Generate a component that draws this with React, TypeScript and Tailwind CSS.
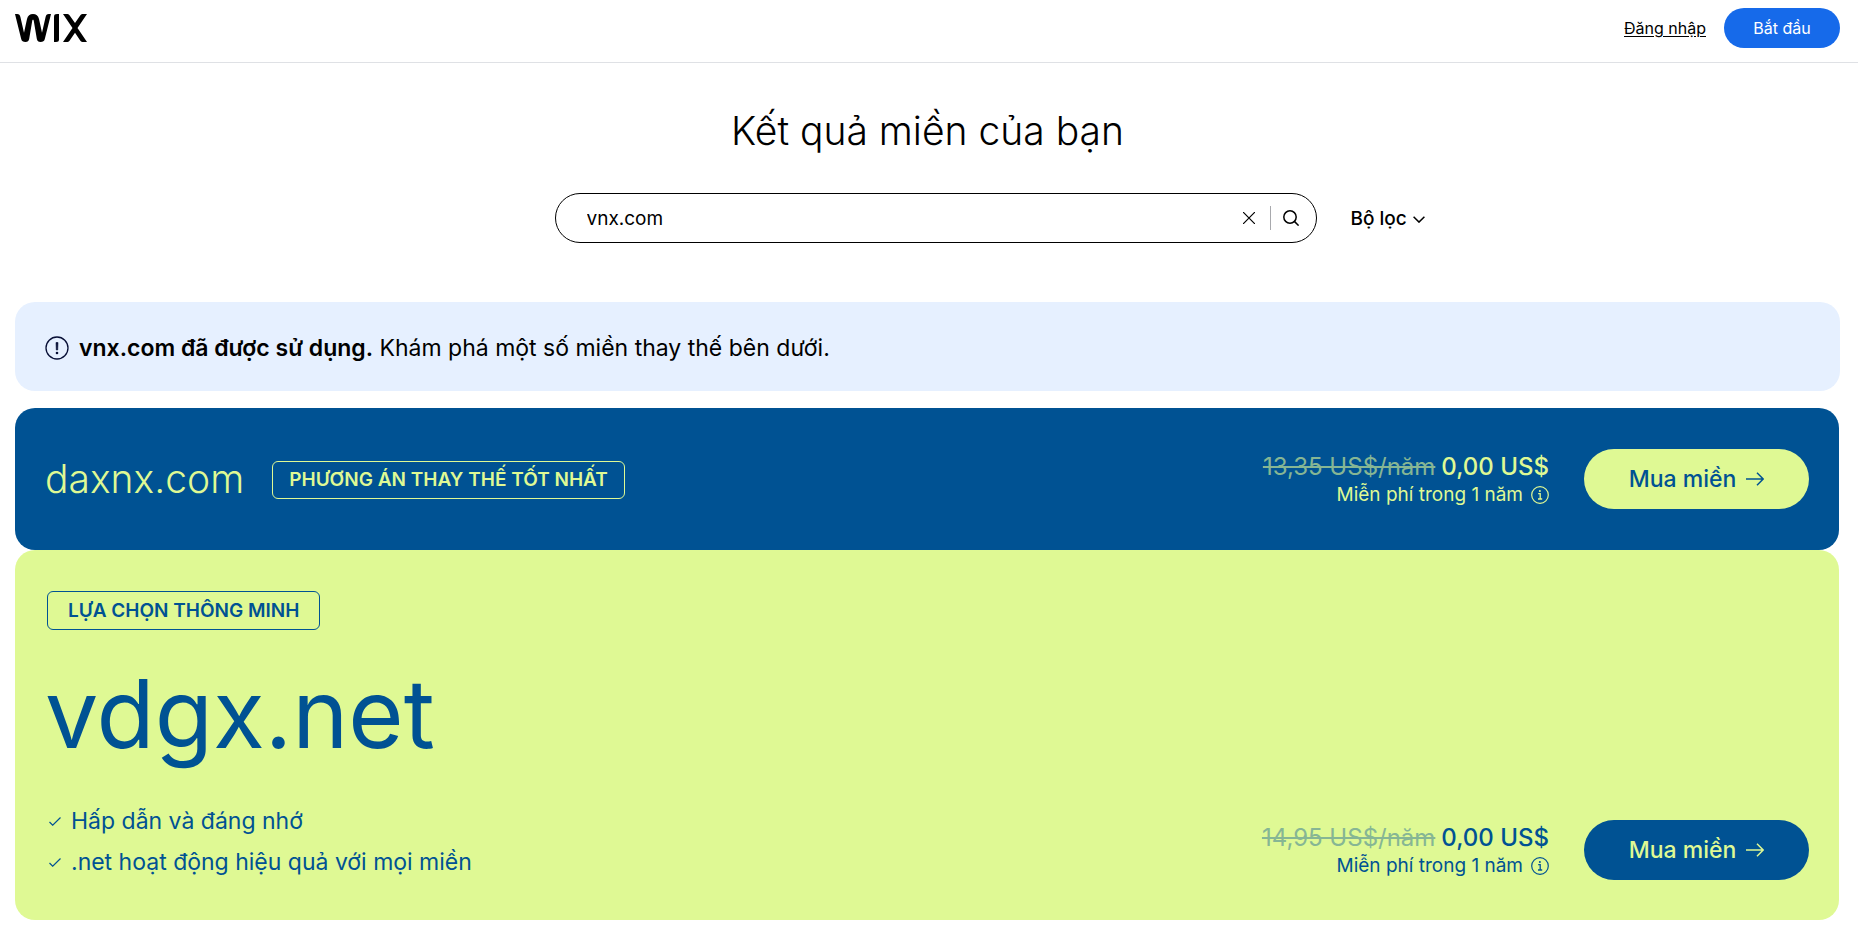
import React, { useState } from 'react';

const WixLogo: React.FC = () => (
  <svg className="h-7 w-[73px]" viewBox="0 0 73 28" role="img" aria-label="Wix">
    <path
      d="M0 0h2.200c1.900 0 2.800 1 3.200 2.900L9 18.800l3-13.800C12.800 1.600 14.900 0 18 0s5.200 1.600 6 5l3 13.800 3.600-15.900C31 1 31.900 0 33.800 0H36l-6.200 25c-.6 2.200-1.900 3-4.300 3-2.200 0-3.200-.9-3.700-3.200L18.800 7c-.2-.9-.3-1.300-.8-1.300s-.6.400-.8 1.300l-3 17.800c-.5 2.300-1.500 3.200-3.700 3.200-2.400 0-3.700-.8-4.300-3Z"
      fill="#000"
    />
    <path d="M39 2.500C39 .8 40 0 42 0h2v25.500c0 1.700-1 2.500-3 2.500h-2Z" fill="#000" />
    <path
      d="M48 0h3.400c1.500 0 2.500.4 3.300 1.600l5.300 7.500 5.200-7.500C66 .4 67 0 68.500 0H72l-9.500 13.900L72 28h-3.500c-1.500 0-2.500-.4-3.300-1.600L60 18.800l-5.300 7.600C53.900 27.600 52.900 28 51.400 28H48l9.500-14.100Z"
      fill="#000"
    />
  </svg>
);

const CloseIcon: React.FC = () => (
  <svg className="h-3 w-3" viewBox="0 0 12 12" fill="none" stroke="currentColor" strokeWidth="1.200">
    <path d="M0 0 12 12M12 0 0 12" />
  </svg>
);

const SearchIcon: React.FC = () => (
  <svg className="h-4 w-4" viewBox="0 0 16 16" fill="none" stroke="currentColor" strokeWidth="1.500">
    <circle cx="7" cy="7" r="6.200" />
    <path d="m11.400 11.400 4.200 4.200" />
  </svg>
);

const ChevronIcon: React.FC = () => (
  <svg className="h-[7px] w-3" viewBox="0 0 12 7" fill="none" stroke="currentColor" strokeWidth="1.500">
    <path d="m.6.700 5.400 5.400L11.400.700" />
  </svg>
);

const AlertIcon: React.FC = () => (
  <svg className="h-6 w-6 shrink-0" viewBox="0 0 24 24" fill="none" stroke="#080f36" strokeWidth="1.300">
    <circle cx="12" cy="12" r="11" />
    <path d="M11 6.500h2l-.3 7.500h-1.400z" fill="#080f36" strokeWidth=".6" />
    <circle cx="12" cy="17" r="1.300" fill="#080f36" stroke="none" />
  </svg>
);

const InfoIcon: React.FC = () => (
  <svg className="h-[18px] w-[18px]" viewBox="0 0 18 18" fill="none" stroke="currentColor" strokeWidth="1.200">
    <circle cx="9" cy="9" r="8.300" />
    <path d="M7.200 7.700h2v5M7 13h4.200" strokeWidth="1.300" />
    <circle cx="8.900" cy="5" r="1" fill="currentColor" stroke="none" />
  </svg>
);

const ArrowIcon: React.FC = () => (
  <svg className="h-4 w-[18px]" viewBox="0 0 18 16" fill="none" stroke="currentColor" strokeWidth="1.500">
    <path d="M0 8h17M11 1.800 17.200 8 11 14.200" />
  </svg>
);

const CheckIcon: React.FC = () => (
  <svg className="h-[9px] w-3 shrink-0" viewBox="0 0 12 9" fill="none" stroke="currentColor" strokeWidth="1.200">
    <path d="m.5 5 3.200 3.200L11.500.500" />
  </svg>
);

interface OfferProps {
  oldPrice: string;
  buttonClass: string;
}

const Offer: React.FC<OfferProps> = ({ oldPrice, buttonClass }) => (
  <div className="flex items-center gap-[35px]">
    <div className="flex flex-col items-end">
      <p className="flex gap-1.5 text-[24px] leading-8">
        <s className="text-[#86b694]">{oldPrice}</s>
        <span className="font-medium">0,00 US$</span>
      </p>
      <p className="flex items-center gap-2 text-[19px] leading-6">
        Miễn phí trong 1 năm
        <InfoIcon />
      </p>
    </div>
    <button className={`flex h-[60px] w-[225px] items-center justify-center gap-2.5 rounded-full text-[23px] font-medium ${buttonClass}`}>
      Mua miền
      <ArrowIcon />
    </button>
  </div>
);

const perks = ['Hấp dẫn và đáng nhớ', '.net hoạt động hiệu quả với mọi miền'];

const App: React.FC = () => {
  const [query, setQuery] = useState('vnx.com');

  return (
    <div className="min-h-screen bg-white font-['Inter',sans-serif] text-black">
      <header className="flex h-[63px] items-start justify-between border-b border-[#dfe1e5] pl-[15px] pr-[18px] pt-2">
        <a href="#" className="pt-1.5">
          <WixLogo />
        </a>
        <div className="flex items-center gap-[18px]">
          <a href="#" className="text-[16px] underline underline-offset-2">Đăng nhập</a>
          <button className="h-10 w-[116px] rounded-full bg-[#166aea] text-[16px] text-white">Bắt đầu</button>
        </div>
      </header>

      <main className="pl-[15px] pr-[18px]">
        <h1 className="pt-[42px] text-center text-[39px] font-light leading-[52px]">Kết quả miền của bạn</h1>

        <div className="mt-9 grid grid-cols-[1fr_762px_1fr] items-center pl-4">
          <form
            className="col-start-2 flex h-[50px] items-center rounded-full border border-black pl-[31px] pr-4"
            onSubmit={(e) => e.preventDefault()}
          >
            <input
              type="text"
              aria-label="Tên miền"
              className="min-w-0 flex-1 bg-transparent pt-0.5 text-[19px] outline-none"
              value={query}
              onChange={(e) => setQuery(e.target.value)}
            />
            <button type="button" aria-label="Xóa" className="mr-[15px]" onClick={() => setQuery('')}>
              <CloseIcon />
            </button>
            <span className="h-6 w-px bg-[#a8a9ad]" />
            <button type="submit" aria-label="Tìm kiếm" className="ml-3 mr-px">
              <SearchIcon />
            </button>
          </form>
          <button className="ml-[34px] flex items-center gap-1.5 justify-self-start pt-0.5 text-[19px] font-medium">
            Bộ lọc
            <ChevronIcon />
          </button>
        </div>

        <div className="mt-[59px] flex h-[89px] items-center gap-2.5 rounded-[20px] bg-[#e6f0ff] px-[30px] pt-[3px] text-[23px]">
          <AlertIcon />
          <p>
            <strong className="font-semibold">vnx.com đã được sử dụng.</strong> Khám phá một số miền thay thế bên dưới.
          </p>
        </div>

        <section className="mr-px mt-[17px] flex h-[142px] items-center justify-between rounded-[20px] bg-[#005293] px-[30px] text-[#dff994]">
          <div className="flex items-center gap-7 pt-px">
            <h2 className="text-[39px] font-light">daxnx.com</h2>
            <span className="rounded-md border border-[#dff994] px-4 text-[19px] font-semibold leading-9">
              PHƯƠNG ÁN THAY THẾ TỐT NHẤT
            </span>
          </div>
          <Offer oldPrice="13,35 US$/năm" buttonClass="bg-[#dff994] text-[#005293]" />
        </section>

        <section className="mr-px flex items-end justify-between rounded-[20px] bg-[#dff994] px-[30px] pb-10 pt-[41px] text-[#005293]">
          <div>
            <span className="ml-0.5 inline-block rounded-md border border-[#005293] px-5 text-[19px] font-semibold leading-[37px]">
              LỰA CHỌN THÔNG MINH
            </span>
            <h2 className="mt-7 text-[95px] leading-[112px]">vdgx.net</h2>
            <ul className="mt-[33px] space-y-[5px]">
              {perks.map((perk) => (
                <li key={perk} className="flex items-center gap-2.5 pl-1 text-[23px] leading-9">
                  <CheckIcon />
                  {perk}
                </li>
              ))}
            </ul>
          </div>
          <Offer oldPrice="14,95 US$/năm" buttonClass="bg-[#005293] text-[#dff994]" />
        </section>
      </main>
    </div>
  );
};

export default App;
